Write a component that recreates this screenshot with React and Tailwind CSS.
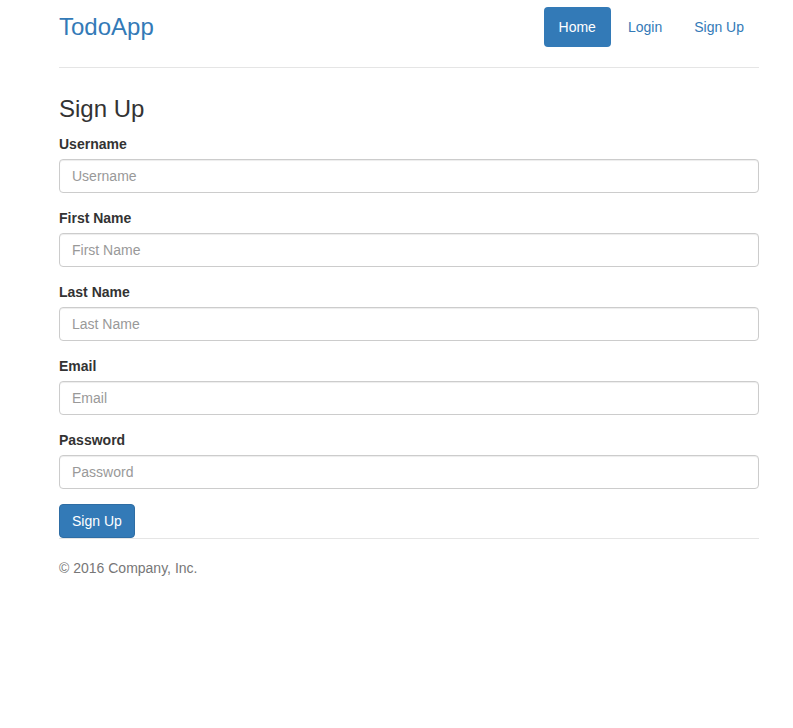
export default function App() {
  const fields = [
    ["Username", "text"],
    ["First Name", "text"],
    ["Last Name", "text"],
    ["Email", "email"],
    ["Password", "password"],
  ];
  return (
    <div className="min-h-[728px] bg-white text-[#333] text-[14px] leading-[20px]" style={{ fontFamily: '"Liberation Sans", Arial, sans-serif' }}>
      <div className="ml-[59px] w-[700px] pt-[7px]">
        <div className="flex items-center justify-between border-b border-[#e5e5e5] pb-[20px]">
          <h3 className="m-0 text-[24px] leading-[40px] text-[#337ab7] font-normal">TodoApp</h3>
          <nav className="flex gap-[2px]">
            <a className="block rounded-[4px] bg-[#337ab7] px-[15px] py-[10px] text-white">Home</a>
            <a className="block rounded-[4px] px-[15px] py-[10px] text-[#337ab7]">Login</a>
            <a className="block rounded-[4px] px-[15px] py-[10px] text-[#337ab7]">Sign Up</a>
          </nav>
        </div>
        <h3 className="mt-[28px] mb-[12px] text-[24px] leading-[26px] font-normal">Sign Up</h3>
        <form>
          {fields.map(([label, type]) => (
            <div key={label} className="mb-[15px]">
              <label className="mb-[5px] block font-bold">{label}</label>
              <input
                type={type}
                placeholder={label}
                className="block h-[34px] w-full rounded-[4px] border border-[#ccc] px-[12px] py-[6px] text-[14px] text-[#555] shadow-[inset_0_1px_1px_rgba(0,0,0,0.075)] placeholder:text-[#999] outline-none"
              />
            </div>
          ))}
          <button type="button" className="block rounded-[4px] border border-[#2e6da4] bg-[#337ab7] px-[12px] py-[6px] text-[14px] leading-[20px] text-white">
            Sign Up
          </button>
        </form>
        <footer className="border-t border-[#e5e5e5] pt-[19px]">
          <p className="m-0 mb-[10px] text-[#777]">© 2016 Company, Inc.</p>
        </footer>
      </div>
    </div>
  );
}
